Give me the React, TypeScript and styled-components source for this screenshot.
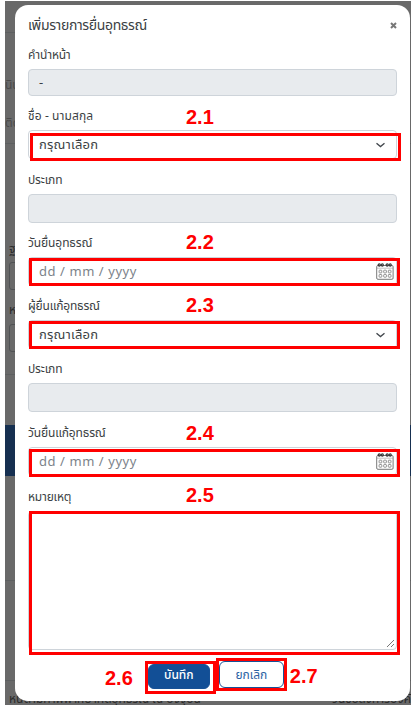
import React from 'react';
import styled, { createGlobalStyle } from 'styled-components';

const Global = createGlobalStyle`
  * { box-sizing: border-box; }
  html, body { margin: 0; background: #fff; overflow: hidden; }
  body { font-family: 'Noto Sans Thai', 'Prompt', 'Kanit', 'Noto Sans', sans-serif; color: #3b3f44; }
`;

const Page = styled.main`
  display: grid;
  width: 411px;
  height: 709px;
  padding: 1px 0 4px 5px;
`;

const Backdrop = styled.div`
  position: relative;
  grid-area: 1 / 1;
  background: #696969;
  overflow: hidden;
`;

const Rule = styled.i<{ $y: number }>`
  position: absolute;
  left: 0;
  right: 0;
  top: ${p => p.$y}px;
  height: 1px;
  background: #5d5f60;
`;

const Band = styled.i`
  position: absolute;
  left: 0;
  right: 0;
  top: 424px;
  height: 51px;
  background: #162f50;
`;

const Behind = styled.span<{ $x: number; $y: number; $dark?: boolean }>`
  position: absolute;
  left: ${p => p.$x}px;
  top: ${p => p.$y}px;
  font-size: 12px;
  line-height: 16px;
  white-space: nowrap;
  color: ${p => (p.$dark ? '#2b2b2b' : '#4b4b4b')};
`;

const BehindBox = styled.i<{ $y: number }>`
  position: absolute;
  left: 4px;
  top: ${p => p.$y}px;
  width: 30px;
  height: 28px;
  border: 1px solid #505254;
  border-radius: 3px;
`;

const Modal = styled.section`
  position: relative;
  grid-area: 1 / 1;
  margin: 4px 1px 4px 10px;
  padding: 0 13px;
  background: #fff;
  border-radius: 13px;
`;

const Header = styled.header`
  display: flex;
  justify-content: space-between;
  align-items: center;
  height: 40px;
  padding-top: 1px;
`;

const Text = styled.span<{ $size: number; $sp?: number }>`
  font-size: ${p => p.$size}px;
  letter-spacing: ${p => p.$sp ?? 0}px;
  white-space: nowrap;
`;

const Field = styled.div<{ $h: number; $label: number }>`
  position: relative;
  display: grid;
  grid-template-rows: ${p => p.$label}px 1fr;
  height: ${p => p.$h}px;
`;

const LabelRow = styled.div`
  display: grid;
  grid-template-columns: 158px 1fr;
  align-items: end;
  padding-bottom: 4px;
`;

const Label = styled.label`
  display: flex;
  align-items: center;
  height: 20px;
  line-height: 20px;
`;

const Control = styled.div<{ $disabled?: boolean }>`
  display: flex;
  justify-content: space-between;
  align-items: center;
  border: 1px solid #ced4da;
  border-radius: 4px;
  padding: 0 11px 0 10px;
  background: ${p => (p.$disabled ? '#e8ebee' : '#fff')};
`;

const DateControl = styled(Control)`
  padding-right: 2px;
  color: #7c838a;
`;

const Area = styled(Control)`
  align-items: flex-end;
  justify-content: flex-end;
  padding: 0 1px 1px;
`;

const Mark = styled.i<{ $x: number; $y: number; $h: number }>`
  position: absolute;
  left: ${p => p.$x}px;
  top: ${p => p.$y}px;
  width: 371px;
  height: ${p => p.$h}px;
  border: 3px solid #f00;
`;

const Num = styled.b<{ $lift?: number }>`
  margin-bottom: ${p => p.$lift ?? 0}px;
  font: bold 20px/20px 'Liberation Sans', sans-serif;
  color: #f00;
`;

const Footer = styled.footer`
  display: flex;
  align-items: flex-start;
  padding: 3px 0 0 77px;
`;

const Frame = styled.div<{ $drop?: number }>`
  display: flex;
  width: 71px;
  height: 33px;
  margin-top: ${p => p.$drop ?? 0}px;
  border: 3px solid #f00;
`;

const FooterNum = styled(Num)<{ $side: 'left' | 'right' }>`
  margin: ${p => (p.$side === 'left' ? '15px 12px 0 0' : '13px 0 0 3px')};
`;

const Button = styled.button<{ $primary?: boolean }>`
  width: ${p => (p.$primary ? 62 : 65)}px;
  height: ${p => (p.$primary ? 25 : 27)}px;
  padding: ${p => (p.$primary ? '0 0 3px' : '0')};
  border: 1px solid #175196;
  border-radius: 6px;
  background: ${p => (p.$primary ? '#124f96' : '#fff')};
  color: ${p => (p.$primary ? '#fff' : '#2c62a3')};
  font-family: inherit;
  font-weight: ${p => (p.$primary ? 500 : 400)};
`;

const Chevron = () => (
  <svg width="9" height="6" viewBox="0 0 9 6" fill="none" stroke="#42474c" strokeWidth="1.3">
    <path d="M.5 1.2 4.5 4.6 8.5 1.2" />
  </svg>
);

const Calendar = () => (
  <svg width="18" height="17" viewBox="0 0 18 17" fill="none" stroke="#555">
    <rect x=".7" y="2.5" width="16.4" height="13.8" rx="1.2" strokeWidth=".8" />
    <path d="M1 5.2H17" stroke="#999" strokeWidth=".6" />
    {[3.3, 6.3, 11.2, 14.2].map(x => (
      <circle key={x} cx={x} cy="2" r="1.1" stroke="#333" strokeWidth="1.1" />
    ))}
    {[4.4, 9, 13.6].map(x =>
      [8.5, 12.8].map(y => (
        <rect key={`${x}-${y}`} x={x - 1.3} y={y - 1.3} width="2.7" height="2.7" rx=".6" stroke="#777" strokeWidth=".8" />
      )),
    )}
  </svg>
);

const Close = () => (
  <svg width="7" height="7" viewBox="0 0 7 7" stroke="#777" strokeWidth="2">
    <path d="M1 1 6 6M6 1 1 6" />
  </svg>
);

const Grip = () => (
  <svg width="9" height="9" viewBox="0 0 9 9" stroke="#666" strokeWidth=".9">
    <path d="M1 8 8 1M5 8 8 5" />
  </svg>
);

type Kind = 'disabled' | 'select' | 'date' | 'area';
type Item = {
  label: string; sp: number; h: number; lh: number; kind: Kind; value?: string;
  num?: string; lift?: number; mark?: [number, number, number];
};

const items: Item[] = [
  { label: 'คำนำหน้า', sp: -0.25, h: 51, lh: 24, kind: 'disabled', value: '-' },
  { label: 'ชื่อ - นามสกุล', sp: 0.1, h: 63, lh: 34, kind: 'select', num: '2.1', lift: -1, mark: [2, 37, 28] },
  { label: 'ประเภท', sp: -0.15, h: 64, lh: 35, kind: 'disabled' },
  { label: 'วันยื่นอุทธรณ์', sp: -0.1, h: 63, lh: 34, kind: 'date', num: '2.2', lift: 1, mark: [1, 35, 28] },
  { label: 'ผู้ยื่นแก้อุทธรณ์', sp: -0.2, h: 63, lh: 34, kind: 'select', num: '2.3', lift: 1, mark: [1, 35, 28] },
  { label: 'ประเภท', sp: -0.15, h: 63, lh: 34, kind: 'disabled' },
  { label: 'วันยื่นแก้อุทธรณ์', sp: -0.15, h: 64, lh: 35, kind: 'date', num: '2.4', mark: [1, 37, 28] },
  { label: 'หมายเหตุ', sp: -0.2, h: 174, lh: 35, kind: 'area', num: '2.5', lift: 2, mark: [1, 35, 144] },
];

function Input({ item }: { item: Item }) {
  switch (item.kind) {
    case 'select':
      return <Control><Text $size={13} $sp={0.2}>กรุณาเลือก</Text><Chevron /></Control>;
    case 'date':
      return <DateControl><Text $size={13} $sp={0.57}>dd / mm / yyyy</Text><Calendar /></DateControl>;
    case 'area':
      return <Area><Grip /></Area>;
    default:
      return <Control $disabled><Text $size={13}>{item.value}</Text></Control>;
  }
}

export default function App() {
  return (
    <Page>
      <Global />
      <Backdrop>
        {[31, 142, 373, 579, 679].map(y => <Rule key={y} $y={y} />)}
        <Band />
        <Behind $x={0} $y={76}>นิน</Behind>
        <Behind $x={0} $y={114}>ติด</Behind>
        <Behind $x={4} $y={240} $dark>ฐาน</Behind>
        <BehindBox $y={261} />
        <Behind $x={4} $y={301} $dark>หน</Behind>
        <BehindBox $y={323} />
        <Behind $x={4} $y={690} $dark>หนี้ตามคำพิพากษาคดีอุทธรณ์ ณ ปัจจุบัน</Behind>
        <Behind $x={327} $y={690} $dark>วันขอส่งการบังคับ</Behind>
      </Backdrop>
      <Modal>
        <Header>
          <Text $size={14} $sp={-0.35}>เพิ่มรายการยื่นอุทธรณ์</Text>
          <Close />
        </Header>
        {items.map((item, i) => (
          <Field key={i} $h={item.h} $label={item.lh}>
            <LabelRow>
              <Label><Text $size={12} $sp={item.sp}>{item.label}</Text></Label>
              {item.num && <Num $lift={item.lift}>{item.num}</Num>}
            </LabelRow>
            <Input item={item} />
            {item.mark && <Mark $x={item.mark[0]} $y={item.mark[1]} $h={item.mark[2]} />}
          </Field>
        ))}
        <Footer>
          <FooterNum $side="left">2.6</FooterNum>
          <Frame $drop={8}>
            <Button $primary><Text $size={12}>บันทึก</Text></Button>
          </Frame>
          <Frame $drop={5}>
            <Button><Text $size={12}>ยกเลิก</Text></Button>
          </Frame>
          <FooterNum $side="right">2.7</FooterNum>
        </Footer>
      </Modal>
    </Page>
  );
}
